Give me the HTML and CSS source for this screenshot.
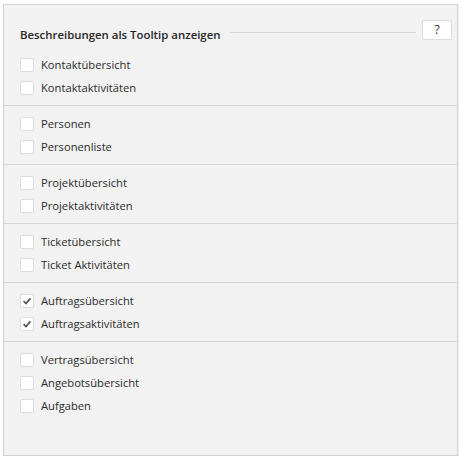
FILE: index.html
```html
<!DOCTYPE html>
<html lang="de">
<head>
<meta charset="utf-8">
<title>Tooltip Einstellungen</title>
<link rel="stylesheet" href="styles.css">
</head>
<body>
<div class="panel">
  <div class="header">
    <div class="title">Beschreibungen als Tooltip anzeigen</div>
    <div class="rule"></div>
    <button class="help" type="button">?</button>
  </div>
  <div class="group">
    <label class="row"><span class="box"></span><span class="label">Kontaktübersicht</span></label>
    <label class="row"><span class="box"></span><span class="label">Kontaktaktivitäten</span></label>
  </div>
  <div class="group">
    <label class="row"><span class="box"></span><span class="label">Personen</span></label>
    <label class="row"><span class="box"></span><span class="label">Personenliste</span></label>
  </div>
  <div class="group">
    <label class="row"><span class="box"></span><span class="label">Projektübersicht</span></label>
    <label class="row"><span class="box"></span><span class="label">Projektaktivitäten</span></label>
  </div>
  <div class="group">
    <label class="row"><span class="box"></span><span class="label">Ticketübersicht</span></label>
    <label class="row"><span class="box"></span><span class="label">Ticket Aktivitäten</span></label>
  </div>
  <div class="group">
    <label class="row"><span class="box checked"><svg viewBox="0 0 14 14" width="14" height="14"><path d="M3.6 7.2 L6 9.6 L10.4 4.4" fill="none" stroke="#555555" stroke-width="1.7"/></svg></span><span class="label">Auftragsübersicht</span></label>
    <label class="row"><span class="box checked"><svg viewBox="0 0 14 14" width="14" height="14"><path d="M3.6 7.2 L6 9.6 L10.4 4.4" fill="none" stroke="#555555" stroke-width="1.7"/></svg></span><span class="label">Auftragsaktivitäten</span></label>
  </div>
  <div class="group last">
    <label class="row"><span class="box"></span><span class="label">Vertragsübersicht</span></label>
    <label class="row"><span class="box"></span><span class="label">Angebotsübersicht</span></label>
    <label class="row"><span class="box"></span><span class="label">Aufgaben</span></label>
  </div>
</div>
</body>
</html>
```
FILE: styles.css
```css
html, body {
  margin: 0;
  padding: 0;
  background: #ffffff;
}
body {
  font-family: "Open Sans", "Noto Sans", sans-serif;
  font-size: 11.2px;
  color: #2b2b2b;
}
.panel {
  box-sizing: border-box;
  margin: 4px 0 0 3px;
  width: 455px;
  height: 452px;
  background: #f2f2f2;
  border: 1px solid #d3d3d3;
  box-shadow: 1px 1px 1px rgba(0, 0, 0, 0.06);
}
.header {
  display: flex;
  align-items: flex-start;
  padding: 15px 5px 0 16px;
  height: 27px;
}
.title {
  margin-top: 7px;
  font-size: 11.4px;
  font-weight: 600;
  line-height: 16px;
  white-space: nowrap;
  color: #262626;
}
.rule {
  flex: 1;
  margin: 12px 6px 0 10px;
  height: 1px;
  background: #d6d6d6;
}
.help {
  box-sizing: border-box;
  width: 30px;
  height: 20px;
  padding: 0;
  background: #ffffff;
  border: 1px solid #dedede;
  border-radius: 2px;
  font-family: inherit;
  font-size: 12px;
  color: #333;
  line-height: 18px;
}
.group {
  padding: 6px 0 6px 16px;
  border-bottom: 1px solid #d6d6d6;
}
.group.last {
  border-bottom: none;
}
.row {
  display: flex;
  align-items: center;
  height: 23px;
}
.box {
  box-sizing: border-box;
  width: 14px;
  height: 14px;
  margin-top: 1px;
  background: #ffffff;
  border: 1px solid #dcdcdc;
  border-radius: 2px;
  margin-right: 7px;
  display: flex;
  align-items: center;
  justify-content: center;
}
.box svg {
  display: block;
  flex: none;
}
.label {
  line-height: 16px;
  white-space: nowrap;
}
```
